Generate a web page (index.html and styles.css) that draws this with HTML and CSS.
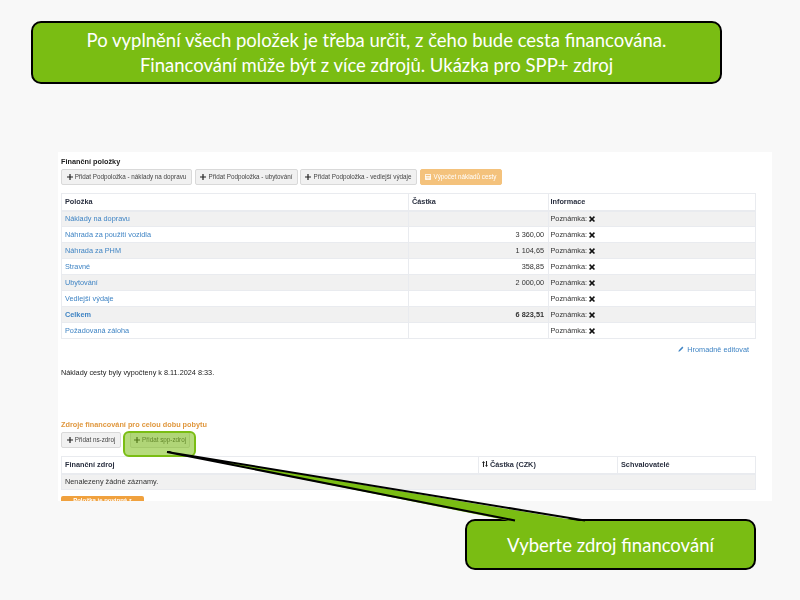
FILE: index.html
```html
<!DOCTYPE html>
<html lang="cs">
<head>
<meta charset="utf-8">
<title>Finanční položky</title>
<link rel="stylesheet" href="styles.css">
</head>
<body>
<main class="slide">
  <section class="panel">
    <h2 class="heading">Finanční položky</h2>
    <div class="toolbar">
      <button class="btn btn-a"><svg class="plus" viewBox="0 0 8 8"><path d="M3.200 0h1.600v3.200H8v1.600H4.800V8H3.200V4.800H0V3.200h3.200z"/></svg>Přidat Podpoložka - náklady na dopravu</button>
      <button class="btn btn-b"><svg class="plus" viewBox="0 0 8 8"><path d="M3.200 0h1.600v3.200H8v1.600H4.800V8H3.200V4.800H0V3.200h3.200z"/></svg>Přidat Podpoložka - ubytování</button>
      <button class="btn btn-c"><svg class="plus" viewBox="0 0 8 8"><path d="M3.200 0h1.600v3.200H8v1.600H4.800V8H3.200V4.800H0V3.200h3.200z"/></svg>Přidat Podpoložka - vedlejší výdaje</button>
      <button class="btn btn-warn"><svg class="calc" viewBox="0 0 8 8"><path d="M1 0h6a1 1 0 0 1 1 1v6a1 1 0 0 1-1 1H1a1 1 0 0 1-1-1V1a1 1 0 0 1 1-1zm0 1v2h6V1zm0 3v1h1V4zm2 0v1h2V4zm3 0v1h1V4zM1 6v1h1V6zm2 0v1h2V6zm3 0v1h1V6z"/></svg>Výpočet nákladů cesty</button>
    </div>
    <table class="grid items">
      <colgroup><col class="c1"><col class="c2"><col class="c3"></colgroup>
      <thead><tr><th>Položka</th><th>Částka</th><th>Informace</th></tr></thead>
      <tbody>
        <tr class="odd"><td><a>Náklady na dopravu</a></td><td></td><td>Poznámka: <svg class="x" viewBox="0 0 8 8"><path d="M1.500 0 4 2.500 6.500 0 8 1.500 5.500 4 8 6.500 6.500 8 4 5.500 1.500 8 0 6.500 2.500 4 0 1.500z"/></svg></td></tr>
        <tr><td><a>Náhrada za použití vozidla</a></td><td class="num">3 360,00</td><td>Poznámka: <svg class="x" viewBox="0 0 8 8"><path d="M1.500 0 4 2.500 6.500 0 8 1.500 5.500 4 8 6.500 6.500 8 4 5.500 1.500 8 0 6.500 2.500 4 0 1.500z"/></svg></td></tr>
        <tr class="odd"><td><a>Náhrada za PHM</a></td><td class="num">1 104,65</td><td>Poznámka: <svg class="x" viewBox="0 0 8 8"><path d="M1.500 0 4 2.500 6.500 0 8 1.500 5.500 4 8 6.500 6.500 8 4 5.500 1.500 8 0 6.500 2.500 4 0 1.500z"/></svg></td></tr>
        <tr><td><a>Stravné</a></td><td class="num">358,85</td><td>Poznámka: <svg class="x" viewBox="0 0 8 8"><path d="M1.500 0 4 2.500 6.500 0 8 1.500 5.500 4 8 6.500 6.500 8 4 5.500 1.500 8 0 6.500 2.500 4 0 1.500z"/></svg></td></tr>
        <tr class="odd"><td><a>Ubytování</a></td><td class="num">2 000,00</td><td>Poznámka: <svg class="x" viewBox="0 0 8 8"><path d="M1.500 0 4 2.500 6.500 0 8 1.500 5.500 4 8 6.500 6.500 8 4 5.500 1.500 8 0 6.500 2.500 4 0 1.500z"/></svg></td></tr>
        <tr><td><a>Vedlejší výdaje</a></td><td></td><td>Poznámka: <svg class="x" viewBox="0 0 8 8"><path d="M1.500 0 4 2.500 6.500 0 8 1.500 5.500 4 8 6.500 6.500 8 4 5.500 1.500 8 0 6.500 2.500 4 0 1.500z"/></svg></td></tr>
        <tr class="odd total"><td><a>Celkem</a></td><td class="num">6 823,51</td><td>Poznámka: <svg class="x" viewBox="0 0 8 8"><path d="M1.500 0 4 2.500 6.500 0 8 1.500 5.500 4 8 6.500 6.500 8 4 5.500 1.500 8 0 6.500 2.500 4 0 1.500z"/></svg></td></tr>
        <tr><td><a>Požadovaná záloha</a></td><td></td><td>Poznámka: <svg class="x" viewBox="0 0 8 8"><path d="M1.500 0 4 2.500 6.500 0 8 1.500 5.500 4 8 6.500 6.500 8 4 5.500 1.500 8 0 6.500 2.500 4 0 1.500z"/></svg></td></tr>
      </tbody>
    </table>
    <div class="edit-row"><a class="edit"><svg class="pencil" viewBox="0 0 8 8"><path d="M5.800 0.800 7.200 2.200 2.500 6.900 0.500 7.500 1.100 5.500z"/></svg>Hromadně editovat</a></div>
    <p class="note">Náklady cesty byly vypočteny k 8.11.2024 8:33.</p>
    <h3 class="subheading">Zdroje financování pro celou dobu pobytu</h3>
    <div class="toolbar toolbar-src">
      <button class="btn btn-d"><svg class="plus" viewBox="0 0 8 8"><path d="M3.200 0h1.600v3.200H8v1.600H4.800V8H3.200V4.800H0V3.200h3.200z"/></svg>Přidat ns-zdroj</button>
      <button class="btn btn-e"><svg class="plus" viewBox="0 0 8 8"><path d="M3.200 0h1.600v3.200H8v1.600H4.800V8H3.200V4.800H0V3.200h3.200z"/></svg>Přidat spp-zdroj</button>
    </div>
    <table class="grid sources">
      <colgroup><col class="s1"><col class="s2"><col class="s3"></colgroup>
      <thead><tr><th>Finanční zdroj</th><th><svg class="sort" viewBox="0 0 8 8"><path d="M2 0 4 2.500H2.700V8H1.300V2.500H0zM6 8 4 5.500h1.300V0h1.400v5.500H8z"/></svg>Částka (CZK)</th><th>Schvalovatelé</th></tr></thead>
      <tbody><tr class="odd"><td colspan="3">Nenalezeny žádné záznamy.</td></tr></tbody>
    </table>
    <span class="badge">Položka je povinná z workflow</span>
  </section>

  <div class="highlight"></div>
  <div class="callout callout-top">Po vyplnění všech položek je třeba určit, z čeho bude cesta financována.<br>Financování může být z více zdrojů. Ukázka pro SPP+ zdroj</div>
  <div class="callout callout-bottom">Vyberte zdroj financování</div>
  <svg class="tail" viewBox="0 0 800 600" aria-hidden="true">
    <path class="tail-fill" d="M167 452 515 522H585Z"/>
    <path class="tail-edge" d="M515 520.500 167 452 585 520.500"/>
  </svg>
</main>
</body>
</html>
```
FILE: styles.css
```css
* { box-sizing: border-box; }
html, body { margin: 0; padding: 0; }
body { background: #f8f8f8; font-family: "Liberation Sans", Arial, sans-serif; }

.slide { position: relative; width: 800px; height: 600px; overflow: hidden; padding: 152px 28px 0 58px; }

.panel { height: 349px; background: #fff; padding: 5px 16px 0 3px; overflow: hidden; font-size: 7.3px; line-height: 10px; color: #333; filter: blur(.45px); }
.heading { margin: 0 0 3px; font-size: 7.3px; line-height: 9px; font-weight: 700; color: #222; }
.toolbar { display: flex; gap: 3px; height: 16px; margin-bottom: 8px; }
.btn { display: flex; align-items: center; justify-content: center; padding: 0; font: inherit; font-size: 6.3px; color: #444; background: #f1f1f1; border: 1px solid #d9d9d9; border-radius: 2px; }
.btn-a { width: 131px; }
.btn-b { width: 103px; }
.btn-c { width: 117px; margin-left: -1px; }
.btn-warn { width: 82px; color: #fff; background: #f4c27c; border-color: #f4c27c; }
.btn-d { width: 60px; }
.btn-e { width: 60px; margin-left: 6px; }
.plus { width: 6px; height: 6px; margin-right: 2px; fill: #222; }
.calc { width: 6px; height: 6px; margin-right: 2px; fill: #fff; }

.grid { width: 695px; border-collapse: collapse; table-layout: fixed; }
.grid th, .grid td { height: 16px; padding: 0 3px; border: 1px solid #e9ebef; vertical-align: middle; white-space: nowrap; overflow: hidden; }
.grid th { height: 17px; text-align: left; font-weight: 700; color: #2a3040; border-bottom-width: 2px; }
.items td:last-child, .items th:last-child { padding-left: 1.500px; }
.odd td { background: #f1f1f1; }
.grid a { color: #3f84c4; }
.num { padding-right: 4px !important; text-align: right; }
.total td { font-weight: 700; }
.total td:last-child { font-weight: 400; }
.c1 { width: 347px; } .c2 { width: 140px; }
.s1 { width: 417px; } .s2 { width: 139px; }
.x { width: 6px; height: 6px; vertical-align: -1px; fill: #111; }

.edit-row { display: flex; justify-content: flex-end; height: 10px; margin: 6px 7px 0 0; }
.edit { color: #3f84c4; }
.pencil { width: 6px; height: 6px; margin-right: 3px; fill: #3f84c4; }
.note { margin: 13px 0 0; color: #222; }
.subheading { margin: 42px 0 3px; font-size: 7.3px; line-height: 9px; font-weight: 700; color: #e0983f; }
.toolbar-src { margin-bottom: 8px; }
.sources th { height: 17px; }
.sort { width: 6px; height: 6px; margin-right: 2px; fill: #222; }
.badge { display: block; width: 83px; height: 12px; margin-top: 6px; background: #f0a13e; color: #fff; font-size: 6px; font-weight: 700; line-height: 9px; text-align: center; border-radius: 2px; }

.highlight { position: absolute; left: 123px; top: 431px; width: 73px; height: 26px; background: rgba(122,189,19,.55); border: 2px solid #7abd13; border-radius: 6px; }
.tail { position: absolute; inset: 0; width: 800px; height: 600px; }
.tail-fill { fill: #7abd13; }
.tail-edge { fill: none; stroke: #000; stroke-width: 2; }
.callout { position: absolute; display: flex; align-items: center; justify-content: center; text-align: center; color: #fff; background: #7abd13; border: 2px solid #000; border-radius: 10px; font-family: Lato, sans-serif; }
.callout-top { left: 31px; top: 21px; width: 691px; height: 63px; font-size: 18.5px; line-height: 25px; }
.callout-bottom { left: 465px; top: 519px; width: 291px; height: 51px; padding-top: 1px; font-size: 18.5px; }
```
